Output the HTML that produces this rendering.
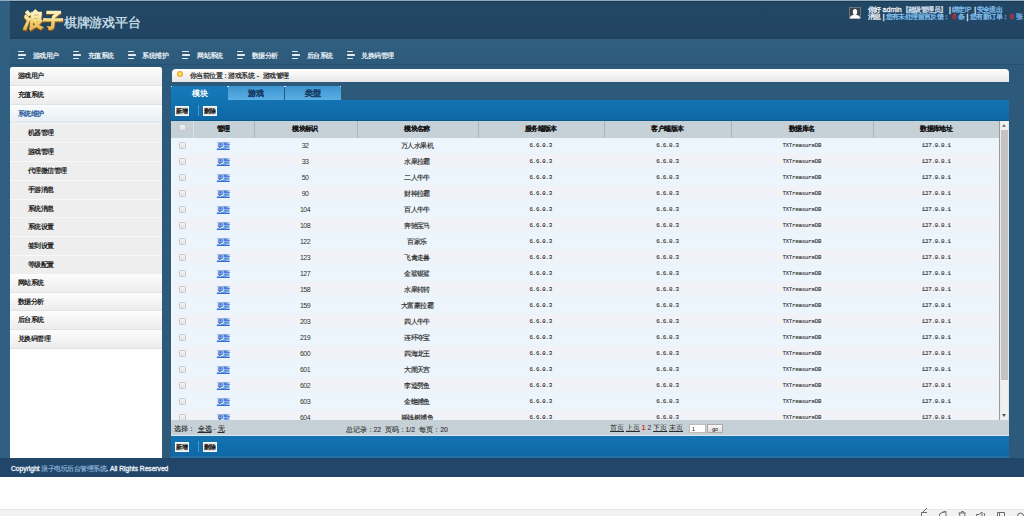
<!DOCTYPE html><html><head><meta charset="utf-8"><style>
*{margin:0;padding:0;box-sizing:border-box}
html,body{width:1024px;height:516px;overflow:hidden;background:#fff;font-family:"Liberation Sans",sans-serif}
.a{position:absolute}
#bg{left:0;top:0;width:1024px;height:476px;background:#2d5a7b}
#strip{left:0;top:0;width:10px;height:458px;background:#2f5f81}
#topl{left:0;top:0;width:1024px;height:1px;background:#8eabc0}
#hdr{left:10px;top:1px;width:1014px;height:38px;background:linear-gradient(#224764,#214563 90%,#1f405c);border-top:1px solid #1a3a55}
#navb{left:10px;top:39px;width:1014px;height:25px;background:linear-gradient(#315f80,#2d5a7b)}
#navl{left:10px;top:64px;width:1014px;height:1px;background:#285171}
.logo{left:24px;top:8px;font-size:19.5px;font-weight:bold;letter-spacing:-0.6px;transform:skewX(-6deg);line-height:24px}
.lg1{color:#8a5214;-webkit-text-stroke:1.6px #8a5214;top:9.4px}
.lg2{background:linear-gradient(#fbf1b8 30%,#f0cf70 60%,#e2ac48);-webkit-background-clip:text;background-clip:text;color:transparent;-webkit-text-stroke:1.3px transparent}
.title{left:64px;top:15px;font-size:12.6px;letter-spacing:-0.3px;color:#d3e2ec;font-weight:normal;-webkit-text-stroke:0.3px #d3e2ec}
.ni{width:9px;height:8px}
.ni i{position:absolute;left:0;height:1.5px;background:#e4ebf0;border-radius:0.7px}
.nt{font-size:7px;letter-spacing:-0.55px;color:#e6eef4;font-weight:bold;line-height:8px}
#side{left:10px;top:67px;width:151.5px;height:391px;background:#fff;border-radius:3px 3px 0 0;overflow:hidden}
.si{position:absolute;left:0;width:152px;height:18.8px;font-size:7px;letter-spacing:-0.6px;line-height:18px;font-weight:bold;color:#222;padding-left:8px}
.s0{background:linear-gradient(#fdfdfd,#ececec);border-bottom:1px solid #e2e2e2}
.s1{background:#eeeeee;border-top:1px solid #f8f8f8;padding-left:18px}
.s2{background:linear-gradient(#fafcfe,#e8eef5);color:#2f619c;font-weight:normal;-webkit-text-stroke:0.3px currentColor;border-bottom:1px solid #dde4ea}
#crumb{left:171.5px;top:69px;width:837.5px;height:13px;border-radius:4px 4px 0 0;background:linear-gradient(#ffffff,#e6e6e6)}
.ct{left:190px;top:71.5px;font-size:7px;letter-spacing:-0.6px;color:#222;line-height:7px;-webkit-text-stroke:0.2px #222;white-space:nowrap}
.ico{left:177.2px;top:71px;width:5.8px;height:5.8px;border-radius:50%;background:radial-gradient(#fff07a 8%,#f5b52c 50%,#dc9014 95%)}
#tb1{left:171px;top:100px;width:838px;height:21px;background:linear-gradient(#1374b3,#0e67a4);border-bottom:1px solid #0c5a90}
.tab{top:85.5px;height:14.8px;font-size:7.8px;font-weight:bold;text-align:center;line-height:16.6px;overflow:hidden}
.tabA{background:linear-gradient(#1779ba,#1374b3);color:#fff}
.tabI{background:linear-gradient(#3d94d0,#5ab0e3);color:#163d68;-webkit-text-stroke:0.2px currentColor}
.btn{height:9.5px;width:14.7px;background:#e2e2e2;font-size:6.4px;letter-spacing:0.2px;line-height:8.5px;text-align:center;color:#1a1a1a;font-weight:normal;-webkit-text-stroke:0.3px #1a1a1a;border:0.5px solid #f8f8f8;white-space:nowrap;text-indent:0.3px}
.sep{width:1px;height:11px;background:#4a9ad0}
#thead{left:171px;top:121px;width:829px;height:17px;background:#c6d1d7}
.th{top:121px;height:17px;font-size:6.6px;letter-spacing:-0.6px;-webkit-text-stroke:0.05px #111;font-weight:bold;color:#1a1a1a;text-align:center;line-height:16.2px}
.dv{top:121px;width:1px;height:17px;background:#a9b5bb}
#tbody{left:171px;top:138px;width:829px;height:282px;background:#ecf5fb;overflow:hidden}
.td{font-size:7px;letter-spacing:-0.6px;color:#2a2a2a;-webkit-text-stroke:0.15px currentColor;text-align:center;line-height:16px;height:16px}
.mono{font-family:"Liberation Mono",monospace;font-size:5.8px;letter-spacing:-0.25px;-webkit-text-stroke:0.1px currentColor}
.lk{color:#2c6fd6;text-decoration:underline;text-decoration-thickness:0.6px;text-underline-offset:0.5px;-webkit-text-stroke:0.2px currentColor}
.cb{width:7px;height:7px;border:1px solid #c6c6c6;border-radius:1.5px;background:linear-gradient(#f4f4f4,#e2e2e2)}
#sbar{left:999px;top:121px;width:10px;height:299px;background:linear-gradient(90deg,#9a9a9a 0,#9a9a9a 1px,#e4e9ec 1px,#f0f0f0 2px,#f0f0f0 9px,#d8e6ee 9px)}
#thumb{left:1001px;top:130px;width:7px;height:249.5px;background:#c4c2c2}
#tfoot{left:171px;top:420px;width:838px;height:16px;background:#c6d1d7;border-bottom:1px solid #d6e8f2}
.ft{top:425px;font-size:6.8px;color:#2a2a2a;line-height:7px;-webkit-text-stroke:0.15px currentColor;white-space:nowrap}
#tb2{left:171px;top:436px;width:838px;height:22px;background:linear-gradient(#1373b2,#0e68a5);border-bottom:2px solid #2670a4}
#foot{left:0;top:458px;width:1024px;height:18.5px;background:#22456a}
.fx{left:11px;top:464.7px;font-size:6.65px;font-weight:normal;color:#e6edf3;line-height:8px;-webkit-text-stroke:0.35px currentColor}
#gbar{left:0;top:508.5px;width:1024px;height:8px;background:#f2f2f2;border-top:1px solid #e6e6e6}
.ut{font-size:7px;letter-spacing:-0.6px;line-height:6px;color:#eef3f7;white-space:nowrap;-webkit-text-stroke:0.3px currentColor}
.ub{color:#7fbdea}
.ur{color:#d02838;font-weight:bold}
.uw{color:#d8e0f0}
.asc{letter-spacing:0}
</style></head><body>
<div class="a" id="bg"></div><div class="a" id="strip"></div><div class="a" id="hdr"></div><div class="a" id="topl"></div>
<div class="a" id="navb"></div><div class="a" id="navl"></div>
<div class="a logo lg1">浪子</div><div class="a logo lg2">浪子</div><div class="a title">棋牌游戏平台</div>
<svg class="a" style="left:849px;top:7px" width="12" height="12" viewBox="0 0 12 12"><rect x="0.5" y="0.5" width="11" height="11" fill="#3c444c" stroke="#6d757c" stroke-width="1"/><ellipse cx="6" cy="5" rx="2.2" ry="3.1" fill="#fff"/><path d="M1 11.5 L1 10.2 Q1.5 8.6 4 8 L8 8 Q10.5 8.6 11 10.2 L11 11.5 Z" fill="#fff"/></svg>
<div class="a ut " style="left:868px;top:7.2px">你好</div>
<div class="a ut asc" style="left:882.6px;top:7.2px">admin</div>
<div class="a ut uw" style="left:901.6px;top:7.2px">【超级管理员】</div>
<div class="a ut " style="left:949px;top:7.2px">|</div>
<div class="a ut ub" style="left:952px;top:7.2px">绑定<span class=asc>IP</span></div>
<div class="a ut " style="left:974.3px;top:7.2px">|</div>
<div class="a ut ub" style="left:976.6px;top:7.2px">安全退出</div>
<div class="a ut " style="left:868px;top:14px">消息</div>
<div class="a ut " style="left:882.8px;top:14px">|</div>
<div class="a ut ub" style="left:885.6px;top:14px">您有未处理留言反馈：</div>
<div class="a ut ur" style="left:952px;top:14px">0</div>
<div class="a ut ub" style="left:958px;top:14px">条</div>
<div class="a ut " style="left:966.5px;top:14px">|</div>
<div class="a ut ub" style="left:970px;top:14px">您有新订单：</div>
<div class="a ut ur" style="left:1009.5px;top:14px">0</div>
<div class="a ut ub" style="left:1015.8px;top:14px">张</div>
<div class="a ni" style="left:18.20px;top:50.7px"><i style="top:0;width:6.2px"></i><i style="top:3.5px;width:8px"></i><i style="top:7px;width:6px"></i></div>
<div class="a nt" style="left:32.90px;top:51.5px">游戏用户</div>
<div class="a ni" style="left:72.95px;top:50.7px"><i style="top:0;width:6.2px"></i><i style="top:3.5px;width:8px"></i><i style="top:7px;width:6px"></i></div>
<div class="a nt" style="left:87.65px;top:51.5px">充值系统</div>
<div class="a ni" style="left:127.70px;top:50.7px"><i style="top:0;width:6.2px"></i><i style="top:3.5px;width:8px"></i><i style="top:7px;width:6px"></i></div>
<div class="a nt" style="left:142.40px;top:51.5px">系统维护</div>
<div class="a ni" style="left:182.45px;top:50.7px"><i style="top:0;width:6.2px"></i><i style="top:3.5px;width:8px"></i><i style="top:7px;width:6px"></i></div>
<div class="a nt" style="left:197.15px;top:51.5px">网站系统</div>
<div class="a ni" style="left:237.20px;top:50.7px"><i style="top:0;width:6.2px"></i><i style="top:3.5px;width:8px"></i><i style="top:7px;width:6px"></i></div>
<div class="a nt" style="left:251.90px;top:51.5px">数据分析</div>
<div class="a ni" style="left:291.95px;top:50.7px"><i style="top:0;width:6.2px"></i><i style="top:3.5px;width:8px"></i><i style="top:7px;width:6px"></i></div>
<div class="a nt" style="left:306.65px;top:51.5px">后台系统</div>
<div class="a ni" style="left:346.70px;top:50.7px"><i style="top:0;width:6.2px"></i><i style="top:3.5px;width:8px"></i><i style="top:7px;width:6px"></i></div>
<div class="a nt" style="left:361.40px;top:51.5px">兑换码管理</div>
<div class="a" id="side">
<div class="si s0" style="top:0.00px">游戏用户</div>
<div class="si s0" style="top:18.80px">充值系统</div>
<div class="si s2" style="top:37.60px">系统维护</div>
<div class="si s1" style="top:56.40px">机器管理</div>
<div class="si s1" style="top:75.20px">游戏管理</div>
<div class="si s1" style="top:94.00px">代理微信管理</div>
<div class="si s1" style="top:112.80px">手游消息</div>
<div class="si s1" style="top:131.60px">系统消息</div>
<div class="si s1" style="top:150.40px">系统设置</div>
<div class="si s1" style="top:169.20px">签到设置</div>
<div class="si s1" style="top:188.00px">等级配置</div>
<div class="si s0" style="top:206.80px">网站系统</div>
<div class="si s0" style="top:225.60px">数据分析</div>
<div class="si s0" style="top:244.40px">后台系统</div>
<div class="si s0" style="top:263.20px">兑换码管理</div>
</div>
<div class="a" id="crumb"></div><div class="a ico"></div><div class="a ct">你当前位置：游戏系统<span style="letter-spacing:0.9px"> - </span>游戏管理</div>
<div class="a" id="tb1"></div>
<div class="a tab tabA" style="left:171px;width:57px">模块</div>
<div class="a tab tabI" style="left:228px;width:56px">游戏</div>
<div class="a tab tabI" style="left:284.5px;width:56.3px">类型</div>
<div class="a" style="left:171.3px;top:85.5px;width:1px;height:1px;background:#d8ecfa"></div>
<div class="a" style="left:227px;top:85.5px;width:1px;height:1px;background:#d8ecfa"></div>
<div class="a" style="left:228.3px;top:85.5px;width:1px;height:1px;background:#d8ecfa"></div>
<div class="a" style="left:283.6px;top:85.5px;width:1px;height:1px;background:#d8ecfa"></div>
<div class="a" style="left:285px;top:85.5px;width:1px;height:1px;background:#d8ecfa"></div>
<div class="a" style="left:340px;top:85.5px;width:1px;height:1px;background:#d8ecfa"></div>
<div class="a btn" style="left:174.5px;top:106px">新增</div><div class="a sep" style="left:198px;top:105px"></div><div class="a btn" style="left:202.8px;top:106px">删除</div>
<div class="a" id="thead"></div>
<div class="a dv" style="left:193.0px;background:#d9e2e7"></div>
<div class="a dv" style="left:253.5px"></div>
<div class="a dv" style="left:356.5px"></div>
<div class="a dv" style="left:477.5px"></div>
<div class="a dv" style="left:604.0px"></div>
<div class="a dv" style="left:731.0px"></div>
<div class="a dv" style="left:872.5px"></div>
<div class="a cb" style="left:179px;top:124.3px"></div>
<div class="a th" style="left:193.0px;width:60.5px">管理</div>
<div class="a th" style="left:253.5px;width:103.0px">模块标识</div>
<div class="a th" style="left:356.5px;width:121.0px">模块名称</div>
<div class="a th" style="left:477.5px;width:126.5px">服务端版本</div>
<div class="a th" style="left:604.0px;width:127.0px">客户端版本</div>
<div class="a th" style="left:731.0px;width:141.5px">数据库名</div>
<div class="a th" style="left:872.5px;width:127.5px">数据库地址</div>
<div class="a" id="tbody">
<div class="a cb" style="left:8px;top:3.9px"></div>
<div class="a td" style="left:22.0px;top:0px;width:60.5px"><span class="lk">更新</span></div>
<div class="a td" style="left:82.5px;top:0px;width:103.0px"><span style="-webkit-text-stroke:0;color:#333">32</span></div>
<div class="a td" style="left:185.5px;top:0px;width:121.0px">万人水果机</div>
<div class="a td mono" style="left:306.5px;top:0px;width:126.5px">6.6.0.3</div>
<div class="a td mono" style="left:433.0px;top:0px;width:127.0px">6.6.0.3</div>
<div class="a td mono" style="left:560.0px;top:0px;width:141.5px">TXTreasureDB</div>
<div class="a td mono" style="left:701.5px;top:0px;width:127.5px">127.0.0.1</div>
<div class="a" style="left:0;top:16px;width:829px;height:16px;background:linear-gradient(#f1f2f7 0%,#f0f3f8 65%,#eaf4fb 100%)"></div>
<div class="a cb" style="left:8px;top:19.9px"></div>
<div class="a td" style="left:22.0px;top:16px;width:60.5px"><span class="lk">更新</span></div>
<div class="a td" style="left:82.5px;top:16px;width:103.0px"><span style="-webkit-text-stroke:0;color:#333">33</span></div>
<div class="a td" style="left:185.5px;top:16px;width:121.0px">水果拉霸</div>
<div class="a td mono" style="left:306.5px;top:16px;width:126.5px">6.6.0.3</div>
<div class="a td mono" style="left:433.0px;top:16px;width:127.0px">6.6.0.3</div>
<div class="a td mono" style="left:560.0px;top:16px;width:141.5px">TXTreasureDB</div>
<div class="a td mono" style="left:701.5px;top:16px;width:127.5px">127.0.0.1</div>
<div class="a cb" style="left:8px;top:35.9px"></div>
<div class="a td" style="left:22.0px;top:32px;width:60.5px"><span class="lk">更新</span></div>
<div class="a td" style="left:82.5px;top:32px;width:103.0px"><span style="-webkit-text-stroke:0;color:#333">50</span></div>
<div class="a td" style="left:185.5px;top:32px;width:121.0px">二人牛牛</div>
<div class="a td mono" style="left:306.5px;top:32px;width:126.5px">6.6.0.3</div>
<div class="a td mono" style="left:433.0px;top:32px;width:127.0px">6.6.0.3</div>
<div class="a td mono" style="left:560.0px;top:32px;width:141.5px">TXTreasureDB</div>
<div class="a td mono" style="left:701.5px;top:32px;width:127.5px">127.0.0.1</div>
<div class="a" style="left:0;top:48px;width:829px;height:16px;background:linear-gradient(#f1f2f7 0%,#f0f3f8 65%,#eaf4fb 100%)"></div>
<div class="a cb" style="left:8px;top:51.9px"></div>
<div class="a td" style="left:22.0px;top:48px;width:60.5px"><span class="lk">更新</span></div>
<div class="a td" style="left:82.5px;top:48px;width:103.0px"><span style="-webkit-text-stroke:0;color:#333">90</span></div>
<div class="a td" style="left:185.5px;top:48px;width:121.0px">财神拉霸</div>
<div class="a td mono" style="left:306.5px;top:48px;width:126.5px">6.6.0.3</div>
<div class="a td mono" style="left:433.0px;top:48px;width:127.0px">6.6.0.3</div>
<div class="a td mono" style="left:560.0px;top:48px;width:141.5px">TXTreasureDB</div>
<div class="a td mono" style="left:701.5px;top:48px;width:127.5px">127.0.0.1</div>
<div class="a cb" style="left:8px;top:67.9px"></div>
<div class="a td" style="left:22.0px;top:64px;width:60.5px"><span class="lk">更新</span></div>
<div class="a td" style="left:82.5px;top:64px;width:103.0px"><span style="-webkit-text-stroke:0;color:#333">104</span></div>
<div class="a td" style="left:185.5px;top:64px;width:121.0px">百人牛牛</div>
<div class="a td mono" style="left:306.5px;top:64px;width:126.5px">6.6.0.3</div>
<div class="a td mono" style="left:433.0px;top:64px;width:127.0px">6.6.0.3</div>
<div class="a td mono" style="left:560.0px;top:64px;width:141.5px">TXTreasureDB</div>
<div class="a td mono" style="left:701.5px;top:64px;width:127.5px">127.0.0.1</div>
<div class="a" style="left:0;top:80px;width:829px;height:16px;background:linear-gradient(#f1f2f7 0%,#f0f3f8 65%,#eaf4fb 100%)"></div>
<div class="a cb" style="left:8px;top:83.9px"></div>
<div class="a td" style="left:22.0px;top:80px;width:60.5px"><span class="lk">更新</span></div>
<div class="a td" style="left:82.5px;top:80px;width:103.0px"><span style="-webkit-text-stroke:0;color:#333">108</span></div>
<div class="a td" style="left:185.5px;top:80px;width:121.0px">奔驰宝马</div>
<div class="a td mono" style="left:306.5px;top:80px;width:126.5px">6.6.0.3</div>
<div class="a td mono" style="left:433.0px;top:80px;width:127.0px">6.6.0.3</div>
<div class="a td mono" style="left:560.0px;top:80px;width:141.5px">TXTreasureDB</div>
<div class="a td mono" style="left:701.5px;top:80px;width:127.5px">127.0.0.1</div>
<div class="a cb" style="left:8px;top:99.9px"></div>
<div class="a td" style="left:22.0px;top:96px;width:60.5px"><span class="lk">更新</span></div>
<div class="a td" style="left:82.5px;top:96px;width:103.0px"><span style="-webkit-text-stroke:0;color:#333">122</span></div>
<div class="a td" style="left:185.5px;top:96px;width:121.0px">百家乐</div>
<div class="a td mono" style="left:306.5px;top:96px;width:126.5px">6.6.0.3</div>
<div class="a td mono" style="left:433.0px;top:96px;width:127.0px">6.6.0.3</div>
<div class="a td mono" style="left:560.0px;top:96px;width:141.5px">TXTreasureDB</div>
<div class="a td mono" style="left:701.5px;top:96px;width:127.5px">127.0.0.1</div>
<div class="a" style="left:0;top:112px;width:829px;height:16px;background:linear-gradient(#f1f2f7 0%,#f0f3f8 65%,#eaf4fb 100%)"></div>
<div class="a cb" style="left:8px;top:115.9px"></div>
<div class="a td" style="left:22.0px;top:112px;width:60.5px"><span class="lk">更新</span></div>
<div class="a td" style="left:82.5px;top:112px;width:103.0px"><span style="-webkit-text-stroke:0;color:#333">123</span></div>
<div class="a td" style="left:185.5px;top:112px;width:121.0px">飞禽走兽</div>
<div class="a td mono" style="left:306.5px;top:112px;width:126.5px">6.6.0.3</div>
<div class="a td mono" style="left:433.0px;top:112px;width:127.0px">6.6.0.3</div>
<div class="a td mono" style="left:560.0px;top:112px;width:141.5px">TXTreasureDB</div>
<div class="a td mono" style="left:701.5px;top:112px;width:127.5px">127.0.0.1</div>
<div class="a cb" style="left:8px;top:131.9px"></div>
<div class="a td" style="left:22.0px;top:128px;width:60.5px"><span class="lk">更新</span></div>
<div class="a td" style="left:82.5px;top:128px;width:103.0px"><span style="-webkit-text-stroke:0;color:#333">127</span></div>
<div class="a td" style="left:185.5px;top:128px;width:121.0px">金鲨银鲨</div>
<div class="a td mono" style="left:306.5px;top:128px;width:126.5px">6.6.0.3</div>
<div class="a td mono" style="left:433.0px;top:128px;width:127.0px">6.6.0.3</div>
<div class="a td mono" style="left:560.0px;top:128px;width:141.5px">TXTreasureDB</div>
<div class="a td mono" style="left:701.5px;top:128px;width:127.5px">127.0.0.1</div>
<div class="a" style="left:0;top:144px;width:829px;height:16px;background:linear-gradient(#f1f2f7 0%,#f0f3f8 65%,#eaf4fb 100%)"></div>
<div class="a cb" style="left:8px;top:147.9px"></div>
<div class="a td" style="left:22.0px;top:144px;width:60.5px"><span class="lk">更新</span></div>
<div class="a td" style="left:82.5px;top:144px;width:103.0px"><span style="-webkit-text-stroke:0;color:#333">158</span></div>
<div class="a td" style="left:185.5px;top:144px;width:121.0px">水果转转</div>
<div class="a td mono" style="left:306.5px;top:144px;width:126.5px">6.6.0.3</div>
<div class="a td mono" style="left:433.0px;top:144px;width:127.0px">6.6.0.3</div>
<div class="a td mono" style="left:560.0px;top:144px;width:141.5px">TXTreasureDB</div>
<div class="a td mono" style="left:701.5px;top:144px;width:127.5px">127.0.0.1</div>
<div class="a cb" style="left:8px;top:163.9px"></div>
<div class="a td" style="left:22.0px;top:160px;width:60.5px"><span class="lk">更新</span></div>
<div class="a td" style="left:82.5px;top:160px;width:103.0px"><span style="-webkit-text-stroke:0;color:#333">159</span></div>
<div class="a td" style="left:185.5px;top:160px;width:121.0px">大富豪拉霸</div>
<div class="a td mono" style="left:306.5px;top:160px;width:126.5px">6.6.0.3</div>
<div class="a td mono" style="left:433.0px;top:160px;width:127.0px">6.6.0.3</div>
<div class="a td mono" style="left:560.0px;top:160px;width:141.5px">TXTreasureDB</div>
<div class="a td mono" style="left:701.5px;top:160px;width:127.5px">127.0.0.1</div>
<div class="a" style="left:0;top:176px;width:829px;height:16px;background:linear-gradient(#f1f2f7 0%,#f0f3f8 65%,#eaf4fb 100%)"></div>
<div class="a cb" style="left:8px;top:179.9px"></div>
<div class="a td" style="left:22.0px;top:176px;width:60.5px"><span class="lk">更新</span></div>
<div class="a td" style="left:82.5px;top:176px;width:103.0px"><span style="-webkit-text-stroke:0;color:#333">203</span></div>
<div class="a td" style="left:185.5px;top:176px;width:121.0px">四人牛牛</div>
<div class="a td mono" style="left:306.5px;top:176px;width:126.5px">6.6.0.3</div>
<div class="a td mono" style="left:433.0px;top:176px;width:127.0px">6.6.0.3</div>
<div class="a td mono" style="left:560.0px;top:176px;width:141.5px">TXTreasureDB</div>
<div class="a td mono" style="left:701.5px;top:176px;width:127.5px">127.0.0.1</div>
<div class="a cb" style="left:8px;top:195.9px"></div>
<div class="a td" style="left:22.0px;top:192px;width:60.5px"><span class="lk">更新</span></div>
<div class="a td" style="left:82.5px;top:192px;width:103.0px"><span style="-webkit-text-stroke:0;color:#333">219</span></div>
<div class="a td" style="left:185.5px;top:192px;width:121.0px">连环夺宝</div>
<div class="a td mono" style="left:306.5px;top:192px;width:126.5px">6.6.0.3</div>
<div class="a td mono" style="left:433.0px;top:192px;width:127.0px">6.6.0.3</div>
<div class="a td mono" style="left:560.0px;top:192px;width:141.5px">TXTreasureDB</div>
<div class="a td mono" style="left:701.5px;top:192px;width:127.5px">127.0.0.1</div>
<div class="a" style="left:0;top:208px;width:829px;height:16px;background:linear-gradient(#f1f2f7 0%,#f0f3f8 65%,#eaf4fb 100%)"></div>
<div class="a cb" style="left:8px;top:211.9px"></div>
<div class="a td" style="left:22.0px;top:208px;width:60.5px"><span class="lk">更新</span></div>
<div class="a td" style="left:82.5px;top:208px;width:103.0px"><span style="-webkit-text-stroke:0;color:#333">600</span></div>
<div class="a td" style="left:185.5px;top:208px;width:121.0px">四海龙王</div>
<div class="a td mono" style="left:306.5px;top:208px;width:126.5px">6.6.0.3</div>
<div class="a td mono" style="left:433.0px;top:208px;width:127.0px">6.6.0.3</div>
<div class="a td mono" style="left:560.0px;top:208px;width:141.5px">TXTreasureDB</div>
<div class="a td mono" style="left:701.5px;top:208px;width:127.5px">127.0.0.1</div>
<div class="a cb" style="left:8px;top:227.9px"></div>
<div class="a td" style="left:22.0px;top:224px;width:60.5px"><span class="lk">更新</span></div>
<div class="a td" style="left:82.5px;top:224px;width:103.0px"><span style="-webkit-text-stroke:0;color:#333">601</span></div>
<div class="a td" style="left:185.5px;top:224px;width:121.0px">大闹天宫</div>
<div class="a td mono" style="left:306.5px;top:224px;width:126.5px">6.6.0.3</div>
<div class="a td mono" style="left:433.0px;top:224px;width:127.0px">6.6.0.3</div>
<div class="a td mono" style="left:560.0px;top:224px;width:141.5px">TXTreasureDB</div>
<div class="a td mono" style="left:701.5px;top:224px;width:127.5px">127.0.0.1</div>
<div class="a" style="left:0;top:240px;width:829px;height:16px;background:linear-gradient(#f1f2f7 0%,#f0f3f8 65%,#eaf4fb 100%)"></div>
<div class="a cb" style="left:8px;top:243.9px"></div>
<div class="a td" style="left:22.0px;top:240px;width:60.5px"><span class="lk">更新</span></div>
<div class="a td" style="left:82.5px;top:240px;width:103.0px"><span style="-webkit-text-stroke:0;color:#333">602</span></div>
<div class="a td" style="left:185.5px;top:240px;width:121.0px">李逵劈鱼</div>
<div class="a td mono" style="left:306.5px;top:240px;width:126.5px">6.6.0.3</div>
<div class="a td mono" style="left:433.0px;top:240px;width:127.0px">6.6.0.3</div>
<div class="a td mono" style="left:560.0px;top:240px;width:141.5px">TXTreasureDB</div>
<div class="a td mono" style="left:701.5px;top:240px;width:127.5px">127.0.0.1</div>
<div class="a cb" style="left:8px;top:259.9px"></div>
<div class="a td" style="left:22.0px;top:256px;width:60.5px"><span class="lk">更新</span></div>
<div class="a td" style="left:82.5px;top:256px;width:103.0px"><span style="-webkit-text-stroke:0;color:#333">603</span></div>
<div class="a td" style="left:185.5px;top:256px;width:121.0px">金蟾捕鱼</div>
<div class="a td mono" style="left:306.5px;top:256px;width:126.5px">6.6.0.3</div>
<div class="a td mono" style="left:433.0px;top:256px;width:127.0px">6.6.0.3</div>
<div class="a td mono" style="left:560.0px;top:256px;width:141.5px">TXTreasureDB</div>
<div class="a td mono" style="left:701.5px;top:256px;width:127.5px">127.0.0.1</div>
<div class="a" style="left:0;top:272px;width:829px;height:16px;background:linear-gradient(#f1f2f7 0%,#f0f3f8 65%,#eaf4fb 100%)"></div>
<div class="a cb" style="left:8px;top:275.9px"></div>
<div class="a td" style="left:22.0px;top:272px;width:60.5px"><span class="lk">更新</span></div>
<div class="a td" style="left:82.5px;top:272px;width:103.0px"><span style="-webkit-text-stroke:0;color:#333">604</span></div>
<div class="a td" style="left:185.5px;top:272px;width:121.0px">摇钱树捕鱼</div>
<div class="a td mono" style="left:306.5px;top:272px;width:126.5px">6.6.0.3</div>
<div class="a td mono" style="left:433.0px;top:272px;width:127.0px">6.6.0.3</div>
<div class="a td mono" style="left:560.0px;top:272px;width:141.5px">TXTreasureDB</div>
<div class="a td mono" style="left:701.5px;top:272px;width:127.5px">127.0.0.1</div>
</div>
<div class="a" id="sbar"></div><div class="a" id="thumb"></div>
<div class="a" style="left:1002px;top:124px;width:0;height:0;border-left:2.5px solid transparent;border-right:2.5px solid transparent;border-bottom:3px solid #777"></div>
<div class="a" style="left:1002px;top:413.5px;width:0;height:0;border-left:2.5px solid transparent;border-right:2.5px solid transparent;border-top:3px solid #555"></div>
<div class="a" id="tfoot"></div>
<div class="a ft" style="left:174px">选择：<span style="margin-left:2.5px"></span><u>全选</u> - <u>无</u></div>
<div class="a ft" style="left:345.5px;top:426.3px;color:#3a3a3a">总记录：22</div>
<div class="a ft" style="left:384.6px;top:426.3px;color:#3a3a3a">页码：1/2</div>
<div class="a ft" style="left:419.3px;top:426.3px;color:#3a3a3a">每页：20</div>
<div class="a ft" style="left:610px;top:424.2px;-webkit-text-stroke:0"><u>首页</u> <u>上页</u> <b style="color:#e02020">1</b> 2 <u>下页</u> <u>末页</u></div>
<div class="a" style="left:689px;top:423.7px;width:17px;height:9.5px;background:#fff;border:0.5px solid #bbb;font-size:5px;line-height:9px;padding-left:2px">1</div>
<div class="a" style="left:707px;top:423.7px;width:16px;height:9.5px;background:linear-gradient(#f8f8f8,#dcdcdc);border:0.5px solid #aaa;font-size:5px;line-height:9px;text-align:center">go</div>
<div class="a" id="tb2"></div>
<div class="a btn" style="left:174.5px;top:442px">新增</div><div class="a sep" style="left:198px;top:441px"></div><div class="a btn" style="left:202.6px;top:442px">删除</div>
<div class="a" id="foot"></div>
<div class="a fx">Copyright <span style="color:#8fb8dc;font-size:7px;letter-spacing:-0.5px;-webkit-text-stroke:0.15px currentColor">浪子电玩后台管理系统</span>. All Rights Reserved</div>
<div class="a" id="gbar"></div>
<svg class="a" style="left:904px;top:508px" width="120" height="8" viewBox="0 0 120 8" fill="none" stroke="#6a6a6a" stroke-width="1"><path d="M17.5 10 L17.5 4.5 L23 4.5 M18 5 L23.5 -0.5"/><path d="M35.5 10 L35.5 6 L39 4 L42 3.5 L42 10 M38 4.5 L41 4"/><path d="M54.5 5 L61.5 5 M55.5 5 L56 10 L60.5 10 L61 5 M57 5 L57.5 3.5 L59.5 3.5 L60 5"/><path d="M72.5 10 L72.5 6.5 L75 6.5 L78 4 L78 10 M80 5 Q81.5 7 80 9"/><path d="M93.5 10 L93.5 4.5 L100.5 4.5 L100.5 10 M95.5 4.5 L95.5 10"/><circle cx="116.5" cy="8" r="3"/></svg>
</body></html>
